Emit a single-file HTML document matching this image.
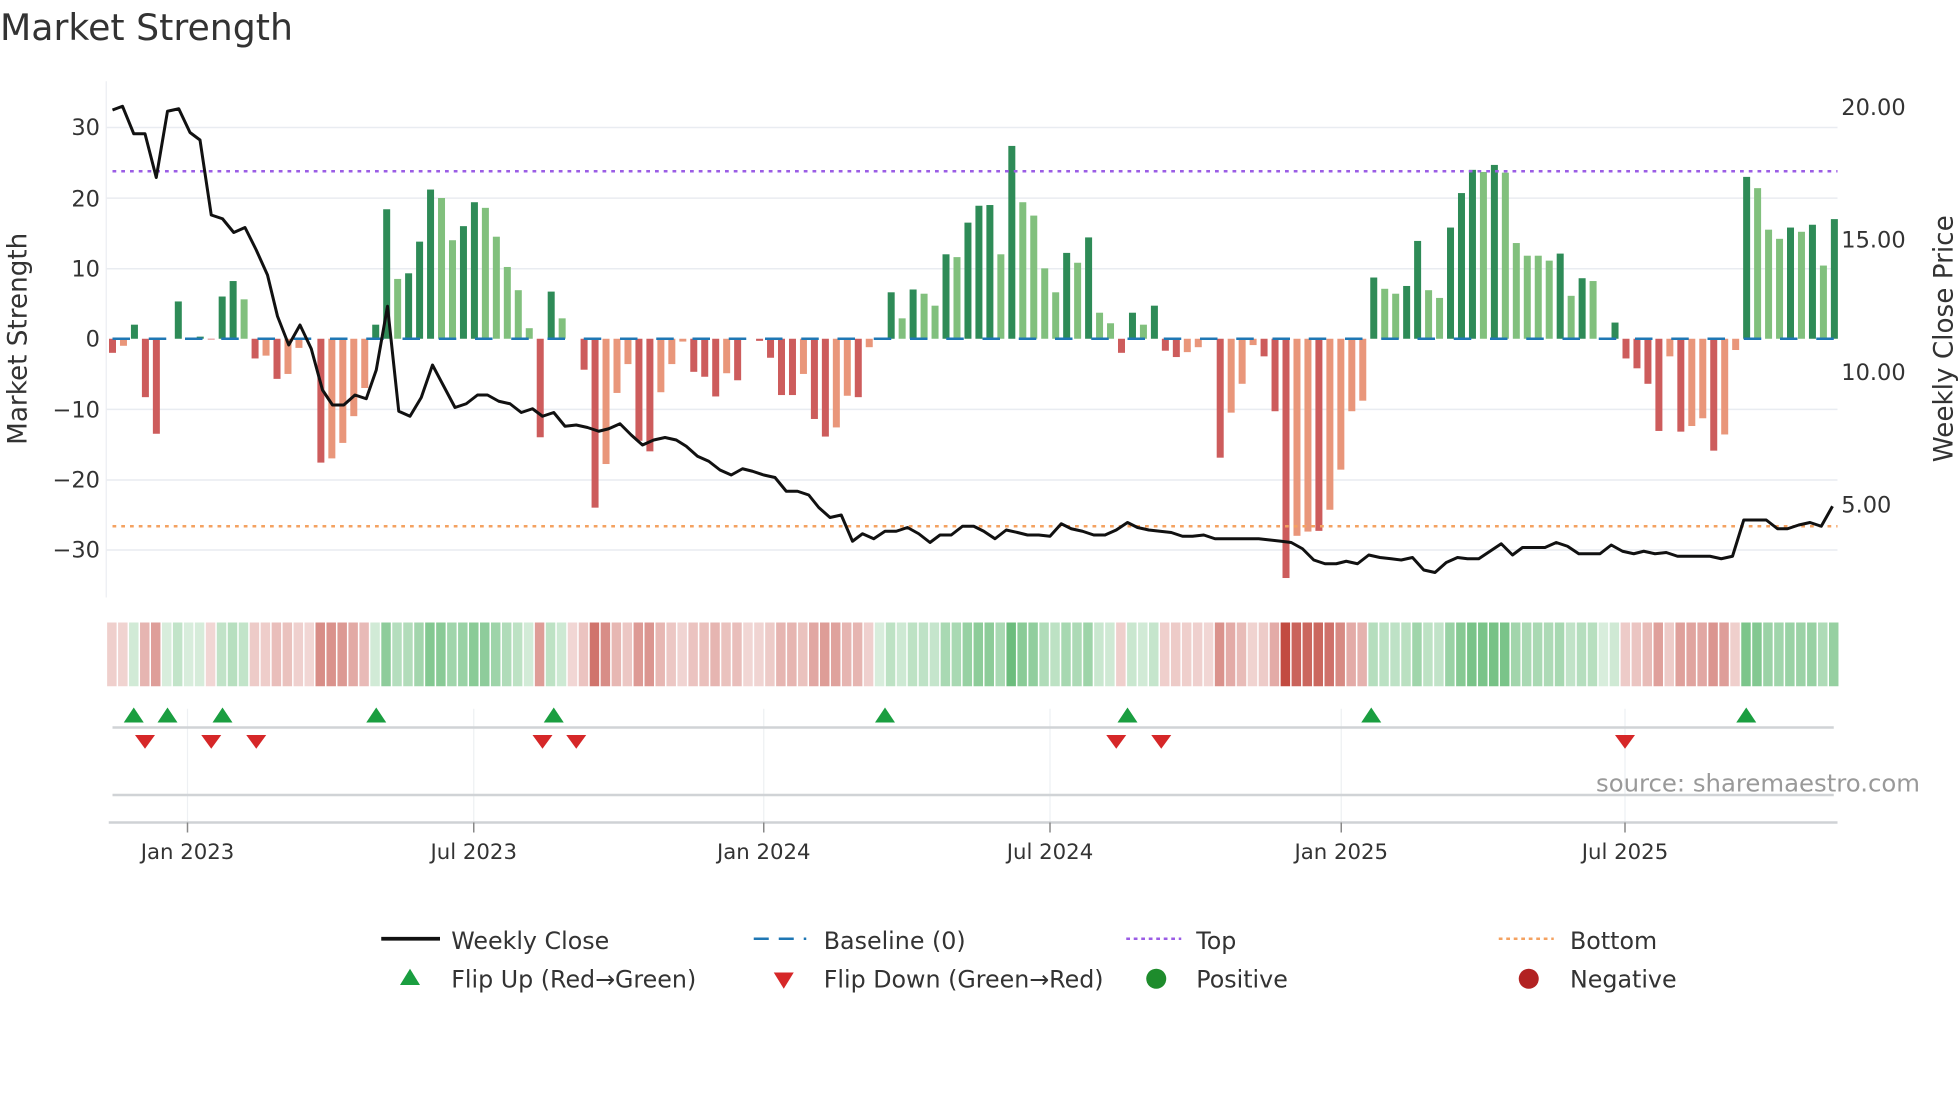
<!DOCTYPE html>
<html><head><meta charset="utf-8"><style>
html,body{margin:0;padding:0;background:#fff;}
svg{display:block;font-family:"DejaVu Sans","Liberation Sans",sans-serif;}
</style></head><body>
<svg id="s" width="1960" height="1102" viewBox="0 0 1568 881.6" xmlns="http://www.w3.org/2000/svg">
<rect width="1568" height="882" fill="#fff"/>
<text x="0" y="32" font-size="29" fill="#333">Market Strength</text>
<g stroke="#e9ecf1" stroke-width="1.2">
<line x1="85" x2="1470" y1="102" y2="102"/><line x1="85" x2="1470" y1="158.5" y2="158.5"/>
<line x1="85" x2="1470" y1="215" y2="215"/><line x1="85" x2="1470" y1="327.5" y2="327.5"/>
<line x1="85" x2="1470" y1="384" y2="384"/><line x1="85" x2="1470" y1="440" y2="440"/>
</g>
<line x1="85" x2="85" y1="65" y2="478" stroke="#eceef2" stroke-width="1"/>
<g font-size="18" fill="#333" text-anchor="end">
<text x="80" y="108">30</text><text x="80" y="165">20</text><text x="80" y="221">10</text>
<text x="80" y="277">0</text><text x="80" y="334">−10</text><text x="80" y="390">−20</text><text x="80" y="446">−30</text>
</g>
<g font-size="18" fill="#333">
<text x="1473" y="92">20.00</text><text x="1473" y="198">15.00</text><text x="1473" y="304">10.00</text><text x="1473" y="410">5.00</text>
</g>
<text transform="translate(21,271) rotate(-90)" font-size="21" fill="#333" text-anchor="middle">Market Strength</text>
<text transform="translate(1562,271) rotate(-90)" font-size="21" fill="#333" text-anchor="middle">Weekly Close Price</text>
<g id="bars"></g>
<line x1="90" x2="1470" y1="271" y2="271" stroke="#1f77b4" stroke-width="2" stroke-dasharray="14,15"/>
<line x1="90" x2="1470" y1="137" y2="137" stroke="#9b5de5" stroke-width="2" stroke-dasharray="3,4"/>
<line x1="90" x2="1470" y1="421" y2="421" stroke="#f4a261" stroke-width="2" stroke-dasharray="3,4"/>
<polyline id="pl" fill="none" stroke="#111" stroke-width="2.4" stroke-linejoin="round"/>
<g id="strip"></g>
<g stroke="#eef0f3" stroke-width="1">
<line x1="150" x2="150" y1="567" y2="658"/><line x1="379" x2="379" y1="567" y2="658"/><line x1="611" x2="611" y1="567" y2="658"/>
<line x1="840" x2="840" y1="567" y2="658"/><line x1="1073" x2="1073" y1="567" y2="658"/><line x1="1300" x2="1300" y1="567" y2="658"/>
</g>
<line x1="90" x2="1467" y1="582" y2="582" stroke="#d0d3d6" stroke-width="2"/>
<line x1="90" x2="1467" y1="636" y2="636" stroke="#d0d3d6" stroke-width="2"/>
<line x1="87" x2="1470" y1="658" y2="658" stroke="#cfd2d5" stroke-width="2"/>
<g stroke="#888" stroke-width="1.2">
<line x1="150" x2="150" y1="658" y2="666"/><line x1="379" x2="379" y1="658" y2="666"/><line x1="611" x2="611" y1="658" y2="666"/>
<line x1="840" x2="840" y1="658" y2="666"/><line x1="1073" x2="1073" y1="658" y2="666"/><line x1="1300" x2="1300" y1="658" y2="666"/>
</g>
<g font-size="17" fill="#333" text-anchor="middle">
<text x="150" y="687">Jan 2023</text><text x="379" y="687">Jul 2023</text><text x="611" y="687">Jan 2024</text>
<text x="840" y="687">Jul 2024</text><text x="1073" y="687">Jan 2025</text><text x="1300" y="687">Jul 2025</text>
</g>
<g id="mk"></g>
<text x="1536" y="633" font-size="19.5" fill="#999" text-anchor="end">source: sharemaestro.com</text>
<g font-size="19" fill="#333">
<line x1="305" x2="352" y1="751" y2="751" stroke="#111" stroke-width="3"/>
<text x="361" y="759">Weekly Close</text>
<line x1="603" x2="645" y1="751" y2="751" stroke="#1f77b4" stroke-width="2" stroke-dasharray="12,8"/>
<text x="659" y="759">Baseline (0)</text>
<line x1="901" x2="945" y1="751" y2="751" stroke="#9b5de5" stroke-width="2" stroke-dasharray="3,3"/>
<text x="957" y="759">Top</text>
<line x1="1199" x2="1243" y1="751" y2="751" stroke="#f4a261" stroke-width="2" stroke-dasharray="3,3"/>
<text x="1256" y="759">Bottom</text>
<polygon points="320,788 336,788 328,775" fill="#1a9e40"/>
<text x="361" y="790">Flip Up (Red→Green)</text>
<polygon points="619,778 635,778 627,791" fill="#d62728"/>
<text x="659" y="790">Flip Down (Green→Red)</text>
<circle cx="925" cy="783" r="8" fill="#1e8c2c"/>
<text x="957" y="790">Positive</text>
<circle cx="1223" cy="783" r="8" fill="#b22222"/>
<text x="1256" y="790">Negative</text>
</g>
</svg>
<script>
var NS="http://www.w3.org/2000/svg";
function el(t,a,p){var e=document.createElementNS(NS,t);for(var k in a)e.setAttribute(k,a[k]);p.appendChild(e);return e;}
var A=[[-2,'r'],[-1,'s'],[2,'d'],[-8.3,'r'],[-13.5,'r'],[0,'d'],[5.3,'d'],[0,'d'],[0.3,'d'],[-0.1,'r'],[6,'d'],[8.2,'d'],[5.6,'l'],[-2.8,'r'],[-2.4,'s'],[-5.7,'r'],[-5,'s'],[-1.3,'s'],[0,'s'],[-17.6,'r'],[-17,'s'],[-14.8,'s'],[-11,'s'],[-7,'s'],[2,'d'],[18.4,'d'],[8.5,'l'],[9.3,'d'],[13.8,'d'],[21.2,'d'],[20,'l'],[14,'l'],[16,'d'],[19.4,'d'],[18.6,'l'],[14.5,'l'],[10.2,'l'],[6.9,'l'],[1.5,'l'],[-14,'r'],[6.7,'d'],[2.9,'l'],[0,'r'],[-4.4,'r'],[-24,'r'],[-17.8,'s'],[-7.7,'s'],[-3.6,'s'],[-14.5,'r'],[-16,'r'],[-7.6,'s'],[-3.6,'s'],[-0.4,'s'],[-4.7,'r'],[-5.4,'r'],[-8.2,'r'],[-4.9,'s'],[-5.9,'r'],[0,'s'],[-0.3,'r'],[-2.7,'r'],[-8,'r'],[-8,'r'],[-5,'s'],[-11.4,'r'],[-13.9,'r'],[-12.6,'s'],[-8.1,'s'],[-8.3,'r'],[-1.2,'s'],[0,'d'],[6.6,'d'],[2.9,'l'],[7,'d'],[6.4,'l'],[4.7,'l'],[12,'d'],[11.6,'l'],[16.5,'d'],[18.9,'d'],
[19,'d'],[12,'l'],[27.4,'d'],[19.4,'l'],[17.5,'l'],[10,'l'],[6.6,'l'],[12.2,'d'],[10.8,'l'],[14.4,'d'],[3.7,'l'],[2.2,'l'],[-2,'r'],[3.7,'d'],[2,'l'],[4.7,'d'],[-1.7,'r'],[-2.6,'r'],[-1.9,'s'],[-1.2,'s'],[0,'s'],[-16.9,'r'],[-10.5,'s'],[-6.4,'s'],[-0.9,'s'],[-2.5,'r'],[-10.3,'r'],[-34,'r'],[-28,'s'],[-27.4,'s'],[-27.3,'r'],[-24.3,'s'],[-18.6,'s'],[-10.3,'s'],[-8.8,'s'],[8.7,'d'],[7.1,'l'],[6.4,'l'],[7.5,'d'],[13.9,'d'],[6.9,'l'],[5.8,'l'],[15.8,'d'],[20.7,'d'],[24,'d'],[23.7,'l'],[24.7,'d'],[23.6,'l'],[13.6,'l'],[11.8,'l'],[11.8,'l'],[11.1,'l'],[12.1,'d'],[6.1,'l'],[8.6,'d'],[8.2,'l'],[0,'l'],[2.3,'d'],[-2.8,'r'],[-4.2,'r'],[-6.4,'r'],[-13.1,'r'],[-2.5,'s'],[-13.2,'r'],[-12.4,'s'],[-11.3,'s'],[-15.9,'r'],[-13.6,'s'],[-1.6,'s'],[23,'d'],[21.4,'l'],[15.5,'l'],[14.2,'l'],[15.8,'d'],[15.2,'l'],[16.2,'d'],[10.4,'l'],[17,'d']];
var C={d:'#2e8b57',l:'#81c07d',r:'#cd5c5c',s:'#e9967a'};
var bars=document.getElementById('bars'),strip=document.getElementById('strip');
var n=A.length,x0=90,x1=1467.5,st=(x1-x0)/(n-1);
for(var i=0;i<n;i++){var v=A[i][0],t=A[i][1],x=x0+i*st;
 if(Math.abs(v)>0.05){var y=271-v*5.63;el('rect',{x:x-2.8,y:Math.min(y,271),width:5.6,height:Math.abs(v*5.63),fill:C[t]},bars);}
 var g=(t=='d'||t=='l'),a=0.22+0.75*Math.min(Math.abs(v),34)/34;
 el('rect',{x:x-4.3,y:498,width:st-1.2,height:51,fill:g?'#4caf60':'#c0453b','fill-opacity':a.toFixed(2)},strip);
}
var P=[[90,88],[98,85],[107,107],[116,107],[125,142],[134,89],[143,87],[152,106],[160,112],[169,172],[178,175],[187,186],[196,182],[205,200],[214,220],[222,253],[231,276],[240,260],[249,279],[258,312],[266,324],[275,324],[284,316],[293,319],[301,296],[310,245],[319,329],[328,333],[337,318],[346,292],[355,309],[364,326],[373,323],[382,316],[390,316],[399,321],[408,323],[417,330],[426,327],[434,333],[443,330],[452,341],[461,340],[470,342],[479,345],[487,343],[496,339],[505,348],[514,356],[523,352],[532,350],[541,352],[549,357],[558,365],[567,369],[576,376],[585,380],[594,375],[602,377],[611,380],[620,382],[629,393],[638,393],[647,396],[655,406],[664,414],[673,412],[682,433],[690,427],[699,431],[708,425],[717,425],[726,422],[735,427],[744,434],[752,428],[761,428],[770,421],[779,421],[787,425],[796,431],[805,424],[814,426],[822,428],[831,428],[840,429],[849,419],[857,423],[866,425],[875,428],[884,428],[893,424],[902,418],[910,422],[919,424],[928,425],[937,426],[946,429],[954,429],[963,428],[972,431],[981,431],[990,431],[998,431],[1007,431],[1016,432],[1025,433],[1033,434],[1042,439],[1051,448],[1060,451],[1069,451],[1077,449],[1086,451],[1095,444],[1104,446],[1113,447],[1121,448],[1130,446],[1139,456],[1148,458],[1157,450],[1166,446],[1174,447],[1183,447],[1192,441],[1201,435],[1210,444],[1218,438],[1227,438],[1236,438],[1245,434],[1254,437],[1263,443],[1271,443],[1280,443],[1289,436],[1298,441],[1307,443],[1315,441],[1324,443],[1333,442],[1342,445],[1351,445],[1359,445],[1368,445],[1377,447],[1386,445],[1395,416],[1404,416],[1413,416],[1422,423],[1430,423],[1439,420],[1448,418],[1457,421],[1466,405]];
document.getElementById('pl').setAttribute('points',P.map(function(p){return p.join(',')}).join(' '));
var mk=document.getElementById('mk');
[107,134,178,301,443,708,902,1097,1397].forEach(function(x){el('polygon',{points:(x-8)+',578 '+(x+8)+',578 '+x+',566',fill:'#1a9e40'},mk);});
[116,169,205,434,461,893,929,1300].forEach(function(x){el('polygon',{points:(x-8)+',588 '+(x+8)+',588 '+x+',599',fill:'#d62728'},mk);});
</script>
</body></html>
